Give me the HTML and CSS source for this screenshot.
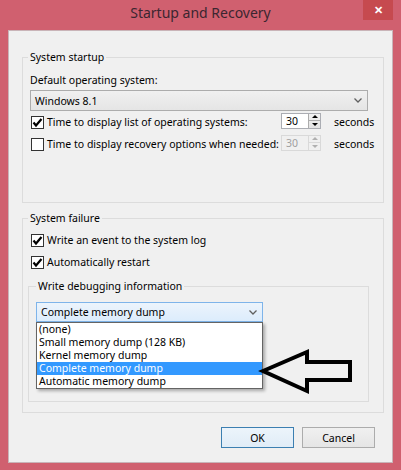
FILE: index.html
```html
<!DOCTYPE html>
<html>
  <head>
    <title>Startup and Recovery</title>
    <link rel="stylesheet" href="styles.css">
  </head>
  <body>
    <div class="window">
      <div class="titlebar">
        <span></span>
        <span class="title">Startup and Recovery</span>
        <span class="close-btn">&#x2715;</span>
      </div>
      <div class="client">
        <!-- System startup group -->
        <fieldset class="group">
          <legend>System startup</legend>
          <div class="field-label">Default operating system:</div>
          <div class="combo">
            <span>Windows 8.1</span>
            <svg class="chevron" width="8" height="5" viewBox="0 0 8 5"><polyline points="0.5,0.5 4,4 7.5,0.5"/></svg>
          </div>
          <div class="time-row">
            <div class="check">
              <span class="box"><svg width="11" height="11" viewBox="0 0 11 11"><path d="M1.5 5.5 L4 8.5 L9.5 2"/></svg></span>
              Time to display list of operating systems:
            </div>
            <div class="spinner">
              <span class="spin-value">30</span>
              <span class="spin-btns"><span class="up"></span><span class="down"></span></span>
            </div>
            <span>seconds</span>
          </div>
          <div class="time-row">
            <div class="check">
              <span class="box"></span>
              Time to display recovery options when needed:
            </div>
            <div class="spinner disabled">
              <span class="spin-value">30</span>
              <span class="spin-btns"><span class="up"></span><span class="down"></span></span>
            </div>
            <span>seconds</span>
          </div>
        </fieldset>

        <!-- System failure group -->
        <fieldset class="group failure">
          <legend>System failure</legend>
          <div class="check">
            <span class="box"><svg width="11" height="11" viewBox="0 0 11 11"><path d="M1.5 5.5 L4 8.5 L9.5 2"/></svg></span>
            Write an event to the system log
          </div>
          <div class="check">
            <span class="box"><svg width="11" height="11" viewBox="0 0 11 11"><path d="M1.5 5.5 L4 8.5 L9.5 2"/></svg></span>
            Automatically restart
          </div>
          <fieldset class="group debug">
            <legend>Write debugging information</legend>
            <div class="combo open">
              <span>Complete memory dump</span>
              <svg class="chevron" width="8" height="5" viewBox="0 0 8 5"><polyline points="0.5,0.5 4,4 7.5,0.5"/></svg>
              <ul class="dropdown">
                <li>(none)</li>
                <li>Small memory dump (128 KB)</li>
                <li>Kernel memory dump</li>
                <li class="selected">Complete memory dump</li>
                <li>Automatic memory dump</li>
              </ul>
            </div>
          </fieldset>
        </fieldset>

        <div class="buttons">
          <button class="btn default">OK</button>
          <button class="btn">Cancel</button>
        </div>

        <svg class="pointer-arrow" width="100" height="52" viewBox="0 0 100 52">
          <path d="M8 26 L52 7 L52 17 L95 17 L95 35 L52 35 L52 46 Z"/>
        </svg>
      </div>
    </div>
  </body>
</html>
```

FILE: styles.css
```css
  body {
    margin: 0;
    font-family: "Noto Sans", sans-serif;
    font-size: 10.5px;
    color: #000;
  }

  /* Window frame */
  .window {
    width: 401px;
    height: 470px;
    box-sizing: border-box;
    padding: 0 8px 7px 8px;
    background-color: #d0606f;
  }

  .titlebar {
    height: 30px;
    display: grid;
    grid-template-columns: 1fr auto 1fr;
    align-items: start;
  }

  .title {
    margin-top: 3px;
    font-size: 14px;
    color: #3b2630;
    line-height: 20px;
  }

  .close-btn {
    justify-self: end;
    width: 30px;
    height: 20px;
    line-height: 20px;
    text-align: center;
    background-color: #c64a4f;
    color: #fff;
    font-size: 11px;
    font-weight: bold;
  }

  .client {
    position: relative;
    height: 433px;
    box-sizing: border-box;
    padding: 18px 0 0 13px;
    background-color: #f0f0f0;
    border: 1px solid #c9b4b8;
  }

  /* Group boxes */
  .group {
    margin: 0;
    width: 362px;
    box-sizing: border-box;
    padding: 0 15px 0 5px;
    border: 1px solid #dcdcdc;
    min-inline-size: 0;
  }

  .group legend {
    padding: 0 2px;
    line-height: 16px;
  }

  .group:first-child {
    height: 154px;
  }

  .field-label {
    margin: 7px 0 0 2px;
    line-height: 16px;
  }

  .combo {
    position: relative;
    margin: 2px 0 0 2px;
    height: 21px;
    box-sizing: border-box;
    border: 1px solid #acacac;
    background: linear-gradient(#f0f0f0, #e5e5e5);
    display: flex;
    align-items: center;
    justify-content: space-between;
    padding: 0 5px 0 4px;
  }

  .chevron polyline {
    fill: none;
    stroke: #606060;
    stroke-width: 1.3;
  }

  .time-row {
    display: grid;
    grid-template-columns: minmax(0, 1fr) 40px 38px;
    column-gap: 13px;
    align-items: center;
    margin-right: -4px;
    height: 22px;
  }

  .time-row:nth-of-type(1) {
    margin-top: 6px;
  }

  .check {
    display: flex;
    align-items: center;
    gap: 3px;
    margin-left: 3px;
    line-height: 16px;
    white-space: nowrap;
  }

  .box {
    width: 13px;
    height: 13px;
    flex: none;
    box-sizing: border-box;
    border: 1px solid #333;
    background-color: #fff;
    display: flex;
    align-items: center;
    justify-content: center;
  }

  .box path {
    fill: none;
    stroke: #000;
    stroke-width: 2.2;
  }

  /* Spinner controls */
  .spinner {
    display: flex;
    height: 16px;
    box-sizing: border-box;
    border: 1px solid #abadb3;
    background-color: #fff;
    margin-bottom: 3px;
  }

  .spin-value {
    flex: 1;
    padding-left: 4px;
    line-height: 14px;
  }

  .spin-btns {
    width: 11px;
    display: flex;
    flex-direction: column;
    border-left: 1px solid #acacac;
    background: linear-gradient(#f2f2f2, #e2e2e2);
  }

  .spin-btns span {
    flex: 1;
    display: flex;
    align-items: center;
    justify-content: center;
  }

  .spin-btns .up {
    border-bottom: 1px solid #acacac;
  }

  .spin-btns .up::after {
    content: "";
    border: 3px solid transparent;
    border-top: 0;
    border-bottom: 3px solid #000;
  }

  .spin-btns .down::after {
    content: "";
    border: 3px solid transparent;
    border-bottom: 0;
    border-top: 3px solid #000;
  }

  .spinner.disabled {
    border-color: #d9d9d9;
    background-color: #f0f0f0;
    color: #a0a0a0;
  }

  .spinner.disabled .spin-btns {
    border-left-color: #d9d9d9;
    background: #f0f0f0;
  }

  .spinner.disabled .up {
    border-bottom-color: #d9d9d9;
  }

  .spinner.disabled .up::after {
    border-bottom-color: #b0b0b0;
  }

  .spinner.disabled .down::after {
    border-top-color: #b0b0b0;
  }

  /* System failure group */
  .failure {
    margin-top: 7px;
    padding-bottom: 10px;
  }

  .failure > .check {
    height: 22px;
  }

  .failure > .check:first-of-type {
    margin-top: 3px;
  }

  .debug {
    width: 341px;
    margin-top: 5px;
    padding: 0 0 79px 7px;
  }

  .debug .combo {
    margin: 8px 0 0 0;
    width: 227px;
    height: 20px;
    border-color: #7eb4ea;
    background: linear-gradient(#ecf4fc, #dcecfc);
  }

  .dropdown {
    position: absolute;
    top: 19px;
    left: -1px;
    width: 227px;
    box-sizing: border-box;
    margin: 0;
    padding: 0;
    list-style: none;
    background-color: #fff;
    border: 1px solid #646464;
    box-shadow: 2px 2px 3px rgba(0, 0, 0, 0.3);
    z-index: 2;
  }

  .dropdown li {
    height: 13px;
    line-height: 13px;
    padding-left: 2px;
    white-space: nowrap;
  }

  .dropdown li.selected {
    background-color: #3399ff;
    color: #fff;
  }

  /* Dialog buttons */
  .buttons {
    display: flex;
    justify-content: flex-end;
    gap: 8px;
    margin: 14px 17px 0 0;
  }

  .btn {
    width: 73px;
    height: 21px;
    padding: 0;
    font-family: "Noto Sans", sans-serif;
    font-size: 10.5px;
    color: #000;
    border: 1px solid #acacac;
    background: linear-gradient(#f0f0f0, #e5e5e5);
  }

  .btn.default {
    border-color: #3c7fb1;
    background: linear-gradient(#ecf4fb, #e0ecf7);
  }

  .pointer-arrow {
    position: absolute;
    left: 246px;
    top: 314px;
    z-index: 3;
  }

  .pointer-arrow path {
    fill: none;
    stroke: #000;
    stroke-width: 4;
    stroke-linejoin: miter;
  }
```
